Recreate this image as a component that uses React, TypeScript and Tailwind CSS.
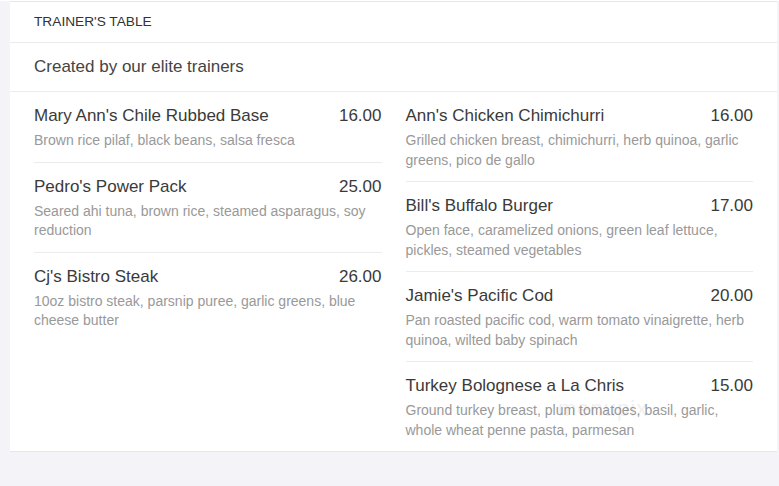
const left = [
  { name: "Mary Ann's Chile Rubbed Base", price: '16.00', desc: 'Brown rice pilaf, black beans, salsa fresca' },
  { name: "Pedro's Power Pack", price: '25.00', desc: 'Seared ahi tuna, brown rice, steamed asparagus, soy reduction' },
  { name: "Cj's Bistro Steak", price: '26.00', desc: '10oz bistro steak, parsnip puree, garlic greens, blue cheese butter' },
];

const right = [
  { name: "Ann's Chicken Chimichurri", price: '16.00', desc: 'Grilled chicken breast, chimichurri, herb quinoa, garlic greens, pico de gallo' },
  { name: "Bill's Buffalo Burger", price: '17.00', desc: 'Open face, caramelized onions, green leaf lettuce, pickles, steamed vegetables' },
  { name: "Jamie's Pacific Cod", price: '20.00', desc: 'Pan roasted pacific cod, warm tomato vinaigrette, herb quinoa, wilted baby spinach' },
  { name: 'Turkey Bolognese a La Chris', price: '15.00', desc: 'Ground turkey breast, plum tomatoes, basil, garlic, whole wheat penne pasta, parmesan' },
];

type Item = { name: string; price: string; desc: string };

function Column({ items }: { items: Item[] }) {
  return (
    <div className="flex flex-col">
      {items.map((item, i) => (
        <div
          key={item.name}
          className={i < items.length - 1 ? 'pt-[13px] pb-[11px] border-b border-[#ececec]' : 'pt-[13px] pb-[11px]'}
        >
          <div className="flex justify-between text-[17px] leading-[22px] text-[#3a3a3a]">
            <span>{item.name}</span>
            <span>{item.price}</span>
          </div>
          <p className="mt-[4px] text-[14px] leading-[19.5px] text-[#999]">{item.desc}</p>
        </div>
      ))}
    </div>
  );
}

export default function App() {
  return (
    <div className="min-h-[486px] bg-[#f4f4f8] pl-[10px] pr-[2px] font-['Liberation_Sans',Arial,sans-serif]">
      <div className="relative bg-white border-t border-b border-[#e6e6ea] mt-[1px]">
        <div className="h-[41px] flex items-center px-[24px] border-b border-[#ececec] text-[13.7px] text-[#333]">
          TRAINER'S TABLE
        </div>
        <div className="h-[49px] flex items-center px-[24px] border-b border-[#ececec] text-[17px] text-[#444]">
          Created by our elite trainers
        </div>
        <div className="grid grid-cols-2 gap-[24px] px-[24px]">
          <Column items={left} />
          <Column items={right} />
        </div>
        <span className="absolute left-[548px] top-[390px] text-[22px] tracking-[1px] text-[#000] opacity-[0.06] pointer-events-none">
          menupix
        </span>
      </div>
    </div>
  );
}
